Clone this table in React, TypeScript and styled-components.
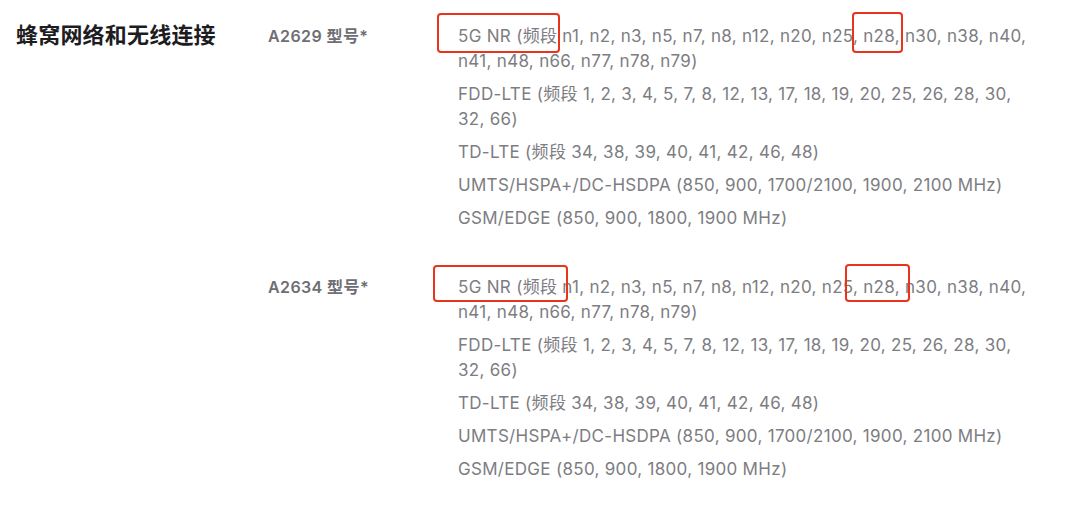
import * as React from 'react';
import styled, { createGlobalStyle } from 'styled-components';

const GlobalStyle = createGlobalStyle`
  html, body {
    margin: 0;
    padding: 0;
    background: #ffffff;
    font-family: "Inter", "Noto Sans CJK SC", sans-serif;
  }
`;

const Page = styled.div`
  display: grid;
  grid-template-columns: 252px 1fr;
  padding: 24px 0 0 16px;
  width: 1080px;
  height: 512px;
  box-sizing: border-box;
  overflow: hidden;
`;

const Heading = styled.h2`
  margin: 0;
  font-family: "Liberation Sans", "Noto Sans CJK SC", sans-serif;
  font-size: 22px;
  line-height: 24px;
  font-weight: 700;
  color: #1d1d1f;
  letter-spacing: 0.2px;
`;

const Models = styled.div`
  display: flex;
  flex-direction: column;
  gap: 44px;
`;

const ModelRow = styled.div`
  display: grid;
  grid-template-columns: 190px 574px;
`;

const ModelName = styled.div`
  font-size: 16px;
  line-height: 25px;
  font-weight: 600;
  color: #6e6e73;
  letter-spacing: 0.4px;
`;

const Specs = styled.div`
  position: relative;
  display: flex;
  flex-direction: column;
  gap: 8px;
`;

const Spec = styled.p`
  margin: 0;
  font-size: 17px;
  line-height: 25px;
  letter-spacing: 0.3px;
  color: #7d7d82;
`;

const Mark = styled.div<{ $l: number; $t: number; $w: number; $h: number }>`
  position: absolute;
  left: ${p => p.$l}px;
  top: ${p => p.$t}px;
  width: ${p => p.$w}px;
  height: ${p => p.$h}px;
  border: 2px solid #e8341c;
  border-radius: 4px;
  box-sizing: border-box;
  pointer-events: none;
`;

const specs = [
  '5G NR (频段 n1, n2, n3, n5, n7, n8, n12, n20, n25, n28, n30, n38, n40, n41, n48, n66, n77, n78, n79)',
  'FDD-LTE (频段 1, 2, 3, 4, 5, 7, 8, 12, 13, 17, 18, 19, 20, 25, 26, 28, 30, 32, 66)',
  'TD-LTE (频段 34, 38, 39, 40, 41, 42, 46, 48)',
  'UMTS/HSPA+/DC-HSDPA (850, 900, 1700/2100, 1900, 2100 MHz)',
  'GSM/EDGE (850, 900, 1800, 1900 MHz)',
];

const models = [
  {
    name: 'A2629 型号*',
    marks: [
      { l: -21, t: -11, w: 123, h: 40 },
      { l: 394, t: -12, w: 51, h: 41 },
    ],
  },
  {
    name: 'A2634 型号*',
    marks: [
      { l: -25, t: -10, w: 135, h: 37 },
      { l: 387, t: -11, w: 65, h: 38 },
    ],
  },
];

export default function App() {
  return (
    <>
      <GlobalStyle />
      <Page>
        <Heading>蜂窝网络和无线连接</Heading>
        <Models>
          {models.map(m => (
            <ModelRow key={m.name}>
              <ModelName>{m.name}</ModelName>
              <Specs>
                {specs.map(s => (
                  <Spec key={s}>{s}</Spec>
                ))}
                {m.marks.map((k, i) => (
                  <Mark key={i} $l={k.l} $t={k.t} $w={k.w} $h={k.h} />
                ))}
              </Specs>
            </ModelRow>
          ))}
        </Models>
      </Page>
    </>
  );
}
